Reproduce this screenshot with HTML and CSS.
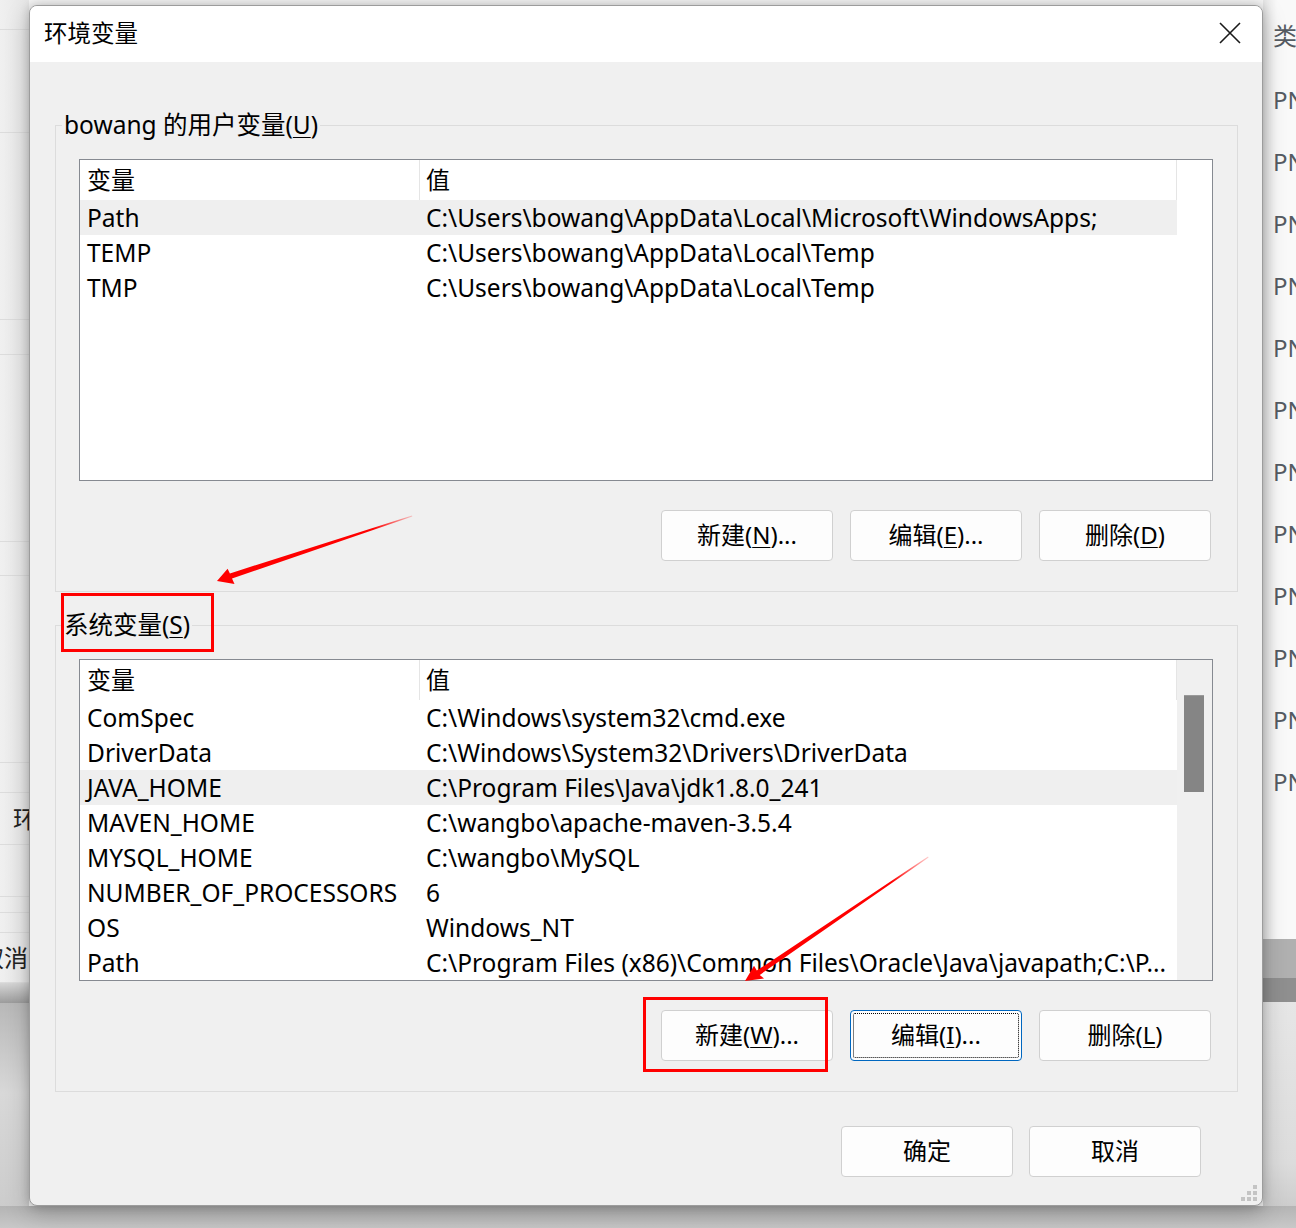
FILE: index.html
```html
<!DOCTYPE html>
<html lang="zh-CN">
<head>
	<meta charset="UTF-8">
	<title>环境变量</title>
	<link rel="stylesheet" href="styles.css">
</head>
<body>
<div class="desk">
	<!-- 背后的窗口 -->
	<div class="back-left">
		<div class="bl" style="height:30px"></div>
		<div class="bl" style="height:103px"></div>
		<div class="bl" style="height:187px"></div>
		<div class="bl" style="height:35px"></div>
		<div class="bl" style="height:187px"></div>
		<div class="bl" style="height:34px"></div>
		<div class="bl" style="height:187px"></div>
		<div class="bl" style="height:30px"></div>
		<div class="bl txt-huan" style="height:52px">环</div>
		<div class="bl" style="height:52px"></div>
		<div class="bl" style="height:16px"></div>
		<div class="bl" style="height:20px"></div>
		<div class="bl txt-cancel" style="height:50px">取消</div>
		<div class="band"></div>
		<div class="low"></div>
	</div>
	<div class="back-right">
		<div class="lei">类</div>
		<div class="pn">PN</div>
		<div class="pn">PN</div>
		<div class="pn">PN</div>
		<div class="pn">PN</div>
		<div class="pn">PN</div>
		<div class="pn">PN</div>
		<div class="pn">PN</div>
		<div class="pn">PN</div>
		<div class="pn">PN</div>
		<div class="pn">PN</div>
		<div class="pn">PN</div>
		<div class="pn">PN</div>
		<div class="gap"></div>
		<div class="band1"></div>
		<div class="band2"></div>
		<div class="low"></div>
	</div>
	<div class="back-bottom"></div>

	<!-- 对话框 -->
	<div class="dialog">
		<div class="titlebar">
			<span class="title">环境变量</span>
			<svg class="close" width="22" height="22" viewBox="0 0 22 22"><path d="M1 1 L21 21 M21 1 L1 21" stroke="#1a1a1a" stroke-width="1.6" fill="none"/></svg>
		</div>
		<div class="body">
			<div class="group first">
				<div class="legend">bowang 的用户变量(<u>U</u>)</div>
				<div class="list">
					<div class="rows">
						<div class="row head"><span class="c1">变量</span><span class="c2">值</span></div>
						<div class="row sel"><span class="c1">Path</span><span class="c2">C:\Users\bowang\AppData\Local\Microsoft\WindowsApps;</span></div>
						<div class="row"><span class="c1">TEMP</span><span class="c2">C:\Users\bowang\AppData\Local\Temp</span></div>
						<div class="row"><span class="c1">TMP</span><span class="c2">C:\Users\bowang\AppData\Local\Temp</span></div>
					</div>
				</div>
				<div class="btns">
					<div class="btn">新建(<u>N</u>)...</div>
					<div class="btn">编辑(<u>E</u>)...</div>
					<div class="btn">删除(<u>D</u>)</div>
				</div>
			</div>

			<div class="group second">
				<div class="legend">系统变量(<u>S</u>)</div>
				<div class="list">
					<div class="rows">
						<div class="row head"><span class="c1">变量</span><span class="c2">值</span></div>
						<div class="row"><span class="c1">ComSpec</span><span class="c2">C:\Windows\system32\cmd.exe</span></div>
						<div class="row"><span class="c1">DriverData</span><span class="c2">C:\Windows\System32\Drivers\DriverData</span></div>
						<div class="row sel"><span class="c1">JAVA_HOME</span><span class="c2">C:\Program Files\Java\jdk1.8.0_241</span></div>
						<div class="row"><span class="c1">MAVEN_HOME</span><span class="c2">C:\wangbo\apache-maven-3.5.4</span></div>
						<div class="row"><span class="c1">MYSQL_HOME</span><span class="c2">C:\wangbo\MySQL</span></div>
						<div class="row"><span class="c1">NUMBER_OF_PROCESSORS</span><span class="c2">6</span></div>
						<div class="row"><span class="c1">OS</span><span class="c2">Windows_NT</span></div>
						<div class="row"><span class="c1">Path</span><span class="c2">C:\Program Files (x86)\Common Files\Oracle\Java\javapath;C:\P...</span></div>
					</div>
					<div class="vscroll"><div class="thumb"></div></div>
				</div>
				<div class="btns">
					<div class="btn">新建(<u>W</u>)...</div>
					<div class="btn focus">编辑(<u>I</u>)...</div>
					<div class="btn">删除(<u>L</u>)</div>
				</div>
			</div>

			<div class="footer">
				<div class="btn">确定</div>
				<div class="btn">取消</div>
			</div>
		</div>
		<svg class="grip" width="18" height="18" viewBox="0 0 18 18">
			<rect x="12" y="0" width="4" height="4" fill="#c4c4c4"/>
			<rect x="6" y="6" width="4" height="4" fill="#c4c4c4"/>
			<rect x="12" y="6" width="4" height="4" fill="#c4c4c4"/>
			<rect x="0" y="12" width="4" height="4" fill="#c4c4c4"/>
			<rect x="6" y="12" width="4" height="4" fill="#c4c4c4"/>
			<rect x="12" y="12" width="4" height="4" fill="#c4c4c4"/>
		</svg>
	</div>

	<!-- 标注 -->
	<div class="mark mark1"></div>
	<div class="mark mark2"></div>
	<svg class="arrows" width="1296" height="1228" viewBox="0 0 1296 1228">
		<defs>
			<linearGradient id="fade1" gradientUnits="userSpaceOnUse" x1="217" y1="581" x2="412" y2="516">
				<stop offset="0" stop-color="#f00"/>
				<stop offset="0.8" stop-color="#f00"/>
				<stop offset="1" stop-color="#f00" stop-opacity="0.2"/>
			</linearGradient>
			<linearGradient id="fade2" gradientUnits="userSpaceOnUse" x1="745" y1="981" x2="928" y2="857">
				<stop offset="0" stop-color="#f00"/>
				<stop offset="0.8" stop-color="#f00"/>
				<stop offset="1" stop-color="#f00" stop-opacity="0.2"/>
			</linearGradient>
		</defs>
		<polygon fill="url(#fade1)" points="217,581 227.6,568.8 229.9,573.4 412,515.4 412.3,516.4 232,578.6 234.5,584"/>
		<polygon fill="url(#fade2)" points="745,981 754,965.8 756.8,970.6 928,856.6 928.6,857.4 759.8,974.9 764,978.4"/>
	</svg>
</div>
</body>
</html>
```
FILE: styles.css
```css
* {
	margin: 0;
	padding: 0;
	box-sizing: border-box;
}
body {
	background: #f3f3f3;
	font-family: "Noto Sans", "Noto Sans CJK SC", sans-serif;
	color: #000;
}
u {
	text-decoration: underline;
	text-underline-offset: 3px;
	text-decoration-thickness: 1px;
}
.desk {
	width: 1296px;
	height: 1228px;
	position: relative;
	overflow: hidden;
	background: #f4f4f4;
}

/* 背后的窗口 */
.back-left {
	position: absolute;
	left: 0;
	top: 0;
	width: 29px;
	height: 1228px;
	background: linear-gradient(to right, #f0f0f0, #e6e6e6);
}
.back-left .bl {
	border-bottom: 1px solid #dcdcdc;
	font-size: 24px;
	white-space: nowrap;
}
.txt-huan {
	padding-left: 13px;
	line-height: 52px;
	color: #222;
}
.txt-cancel {
	margin-left: -20px;
	line-height: 50px;
	color: #222;
}
.back-left .band {
	height: 20px;
	background: linear-gradient(#d6d6d6, #9c9c9c);
}
.back-left .low {
	height: 225px;
	background: linear-gradient(#b8b8b8, #d8d8d8 40%, #cacaca);
}
.back-right {
	position: absolute;
	left: 1263px;
	top: 0;
	width: 33px;
	height: 1228px;
	padding-top: 5px;
	background: linear-gradient(to right, #e4e4e4, #f9f9f9 14px);
	overflow: hidden;
	font-size: 24px;
	color: #555b62;
	white-space: nowrap;
}
.back-right .lei {
	height: 62px;
	line-height: 62px;
	margin-bottom: 2px;
	padding-left: 10px;
}
.back-right .pn {
	height: 62px;
	line-height: 62px;
	padding-left: 10px;
}
.back-right .gap {
	height: 126px;
}
.back-right .band1 {
	height: 39px;
	background: #b0b0b0;
}
.back-right .band2 {
	height: 24px;
	background: #8f8f8f;
}
.back-right .low {
	height: 230px;
	background: linear-gradient(#e6e6e6, #dcdcdc 70%, #c4c4c4);
}
.back-bottom {
	position: absolute;
	left: 0;
	top: 1206px;
	width: 1296px;
	height: 22px;
	background: linear-gradient(#b4b4b4, #c8c8c8);
}

/* 对话框 */
.dialog {
	position: absolute;
	left: 29px;
	top: 5px;
	width: 1234px;
	height: 1201px;
	border: 1px solid #9c9c9c;
	border-radius: 8px;
	background: #f0f0f0;
	overflow: hidden;
	box-shadow: 0 0 10px rgba(0, 0, 0, 0.18), 0 8px 24px rgba(0, 0, 0, 0.22);
}
.titlebar {
	height: 56px;
	background: #fff;
	display: flex;
	align-items: center;
	justify-content: space-between;
	padding: 0 21px 0 14px;
}
.title {
	font-size: 23.5px;
	line-height: 56px;
	padding-bottom: 2px;
}
.close {
	display: block;
	margin-bottom: 2px;
}
.body {
	padding: 0 24px 0 25px;
}
.group {
	border: 1px solid #dcdcdc;
	padding: 0 24px 30px 23px;
}
.group.first {
	margin-top: 63px;
}
.group.second {
	margin-top: 33px;
}
.legend {
	width: fit-content;
	height: 32px;
	line-height: 32px;
	margin: -17px 0 0 -17px;
	padding: 0 2px 0 2px;
	background: #f0f0f0;
	font-size: 24.5px;
	white-space: nowrap;
}
.list {
	margin-top: 18px;
	height: 322px;
	border: 1px solid #868a91;
	background: #fff;
	display: flex;
	overflow: hidden;
}
.rows {
	width: 1097px;
	height: 320px;
	overflow: hidden;
}
.row {
	display: flex;
	height: 35px;
	line-height: 35px;
	font-size: 24.5px;
	white-space: nowrap;
}
.row.head {
	height: 40px;
	line-height: 40px;
	border-right: 1px solid #e5e5e5;
	font-size: 24px;
}
.row.sel {
	background: #efefef;
}
.c1 {
	width: 340px;
	padding-left: 7px;
	flex: none;
	overflow: hidden;
}
.head .c1 {
	border-right: 1px solid #e5e5e5;
}
.c2 {
	padding-left: 6px;
	overflow: hidden;
}
.vscroll {
	width: 35px;
	background: #f0f0f0;
	padding: 35px 0 0 7px;
}
.thumb {
	width: 20px;
	height: 97px;
	background: #858585;
	border-top: 1px solid #9a9a9a;
}
.btns {
	display: flex;
	justify-content: flex-end;
	gap: 17px;
	margin-top: 29px;
	padding-right: 2px;
}
.btn {
	position: relative;
	width: 172px;
	height: 51px;
	border: 1px solid #d0d0d0;
	border-radius: 4px;
	background: #fdfdfd;
	font-size: 24px;
	line-height: 48px;
	text-align: center;
	white-space: nowrap;
}
.btn.focus {
	border-color: #0067c0;
}
.btn.focus::after {
	content: "";
	position: absolute;
	left: 2px;
	top: 2px;
	right: 2px;
	bottom: 2px;
	border: 1px dotted #000;
	border-radius: 2px;
}
.footer {
	display: flex;
	justify-content: flex-end;
	gap: 16px;
	margin-top: 34px;
	padding-right: 37px;
}
.grip {
	position: absolute;
	right: 3px;
	bottom: 2px;
}

/* 标注 */
.mark {
	position: absolute;
	border: 3px solid #ff0000;
}
.mark1 {
	left: 61px;
	top: 593px;
	width: 153px;
	height: 59px;
}
.mark2 {
	left: 643px;
	top: 997px;
	width: 185px;
	height: 75px;
}
.arrows {
	position: absolute;
	left: 0;
	top: 0;
}
```
